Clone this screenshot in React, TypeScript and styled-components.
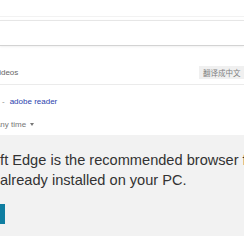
import React from "react";
import styled, { createGlobalStyle } from "styled-components";

const GlobalStyle = createGlobalStyle`
    html, body {
        margin: 0;
        padding: 0;
        background: #ffffff;
        overflow: hidden;
    }
    body {
        font-family: "Liberation Sans", Arial, sans-serif;
    }
`;

const App = () => {
    return (
        <>
            <GlobalStyle />
            <Page>
                <TopStrip />
                <SearchBar />
                <TabsRow>
                    <Tab>Videos</Tab>
                    <TranslateButton>翻译成中文</TranslateButton>
                </TabsRow>
                <Related>
                    <Dash>-</Dash>
                    <RelatedLink>adobe reader</RelatedLink>
                </Related>
                <TimeFilter>
                    Any time <Caret />
                </TimeFilter>
                <Banner>
                    <Message>
                        Microsoft Edge is the recommended browser for Windows 10
                        <br />
                        already installed on your PC.
                    </Message>
                    <LaunchButton>Launch</LaunchButton>
                </Banner>
            </Page>
        </>
    );
};

export default App;

const Page = styled.div`
    width: 244px;
    height: 244px;
    overflow: hidden;
    display: flex;
    flex-direction: column;
`;

const TopStrip = styled.div`
    height: 16px;
    border-bottom: 1px solid #f2f2f2;
    flex-shrink: 0;
`;

const SearchBar = styled.div`
    margin-top: 3px;
    height: 24px;
    border-top: 1px solid #e6e6e6;
    border-bottom: 1px solid #d3d3d3;
    box-shadow: 0 1px 2px rgba(0, 0, 0, 0.06);
    flex-shrink: 0;
`;

const TabsRow = styled.div`
    display: flex;
    align-items: center;
    justify-content: space-between;
    height: 39px;
    padding: 21px 0 6px;
    box-sizing: border-box;
    border-bottom: 1px solid #ebebeb;
    flex-shrink: 0;
`;

const Tab = styled.span`
    margin-left: -6px;
    font-size: 8px;
    line-height: 12px;
    color: #666666;
`;

const TranslateButton = styled.span`
    height: 13px;
    width: 45px;
    padding-left: 4px;
    box-sizing: border-box;
    background: #f0f0f0;
    color: #7f7f7f;
    font-family: "Noto Sans CJK SC", sans-serif;
    font-size: 7.5px;
    line-height: 13px;
    white-space: nowrap;
    overflow: hidden;
`;

const Related = styled.div`
    display: flex;
    align-items: center;
    gap: 5px;
    margin-top: 11px;
    padding-left: 2px;
    font-size: 8px;
    line-height: 12px;
`;

const Dash = styled.span`
    color: #888888;
`;

const RelatedLink = styled.span`
    color: #2b3fae;
`;

const TimeFilter = styled.div`
    margin-top: 11px;
    margin-left: -5px;
    font-size: 8px;
    line-height: 12px;
    color: #777777;
    white-space: nowrap;
`;

const Caret = styled.span`
    display: inline-block;
    width: 0;
    height: 0;
    margin-left: 2px;
    vertical-align: 1px;
    border-left: 2.5px solid transparent;
    border-right: 2.5px solid transparent;
    border-top: 3px solid #777777;
`;

const Banner = styled.div`
    margin-top: 4px;
    height: 101px;
    box-sizing: border-box;
    padding-top: 15px;
    background: #f2f2f2;
    flex-shrink: 0;
`;

const Message = styled.p`
    margin: 0;
    font-size: 14.6px;
    line-height: 20px;
    color: #333333;
    white-space: nowrap;
    text-indent: -51px;
`;

const LaunchButton = styled.div`
    margin-top: 14px;
    margin-left: -56px;
    width: 61px;
    height: 20px;
    background: #0f7ea1;
    color: #ffffff;
    font-size: 9px;
    line-height: 20px;
    text-align: center;
`;
